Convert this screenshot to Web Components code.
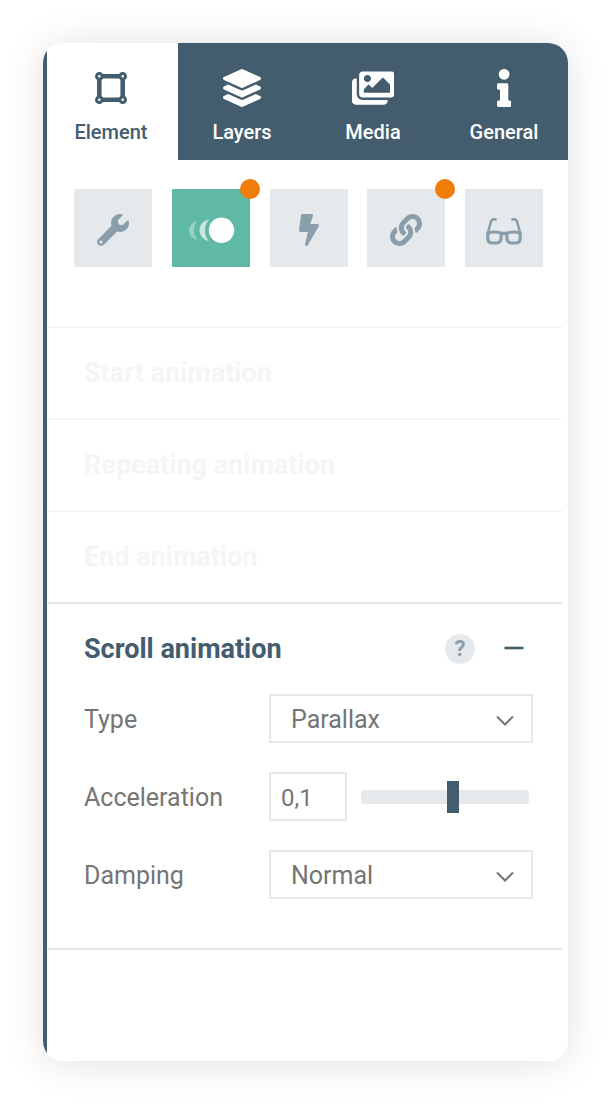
<!DOCTYPE html>
<html lang="en">
<head>
<meta charset="utf-8">
<meta name="viewport" content="width=device-width, initial-scale=1">
<title>Element settings</title>
<style>
    :root {
        --dark: #435d6e;
        --muted: #8a9daa;
        --line: #e4e9ed;
        --tile: #e5e9ec;
        --text: #757575;
        --accent: #5fb9a4;
        --badge: #f07d0a;
    }

    body {
        margin: 0;
        padding: 43px;
        background: #fff;
        font-family: Roboto, "Liberation Sans", sans-serif;
    }
</style>
</head>
<body>
<editor-panel>
    <panel-tab slot="tabs" icon="element" active>Element</panel-tab>
    <panel-tab slot="tabs" icon="layers">Layers</panel-tab>
    <panel-tab slot="tabs" icon="media">Media</panel-tab>
    <panel-tab slot="tabs" icon="info">General</panel-tab>

    <tool-tile slot="tools" icon="wrench" label="Settings"></tool-tile>
    <tool-tile slot="tools" icon="motion" label="Animation" active badge></tool-tile>
    <tool-tile slot="tools" icon="bolt" label="Actions"></tool-tile>
    <tool-tile slot="tools" icon="link" label="Link" badge></tool-tile>
    <tool-tile slot="tools" icon="glasses" label="Visibility"></tool-tile>

    <panel-section heading="Start animation" faded></panel-section>
    <panel-section heading="Repeating animation" faded></panel-section>
    <panel-section heading="End animation" faded></panel-section>
    <panel-section heading="Scroll animation">
        <select-field label="Type" options="Parallax,None"></select-field>
        <slider-field label="Acceleration" min="-1" max="1" step="0.1" value="0.1"></slider-field>
        <select-field label="Damping" options="Normal,Slow,Fast"></select-field>
    </panel-section>
</editor-panel>

<script>
const ICONS = {
    element: {
        box: "0 0 32 32",
        body: `<path fill="none" stroke="currentColor" stroke-width="4.6" d="M4.3 4.3h23.4v23.4h-23.4z"/>
            <g fill="#fff" stroke="currentColor" stroke-width="3">
                <circle cx="4.3" cy="4.3" r="2.8"/><circle cx="27.7" cy="4.3" r="2.8"/>
                <circle cx="4.3" cy="27.7" r="2.8"/><circle cx="27.7" cy="27.7" r="2.8"/>
            </g>`,
    },
    layers: {
        box: "0 0 512 512",
        body: `<path d="M12.41 148.02l232.94 105.67c6.8 3.09 14.49 3.09 21.29 0l232.94-105.67c16.55-7.51 16.55-32.52 0-40.03L266.65 2.31a25.607 25.607 0 0 0-21.29 0L12.41 107.98c-16.55 7.51-16.55 32.53 0 40.04zm487.18 88.28l-58.09-26.33-161.64 73.27c-7.56 3.43-15.59 5.17-23.86 5.17s-16.29-1.74-23.86-5.17L70.51 209.97l-58.1 26.33c-16.55 7.5-16.55 32.5 0 40l232.94 105.59c6.8 3.08 14.49 3.08 21.29 0L499.59 276.3c16.55-7.5 16.55-32.5 0-40zm0 127.8l-57.87-26.23-161.86 73.37c-7.56 3.43-15.59 5.17-23.86 5.17s-16.29-1.74-23.86-5.17L70.29 337.87 12.41 364.1c-16.55 7.5-16.55 32.5 0 40l232.94 105.59c6.8 3.08 14.49 3.08 21.29 0L499.59 404.1c16.55-7.5 16.55-32.5 0-40z"/>`,
    },
    media: {
        box: "0 0 576 512",
        body: `<path d="M480 416v16c0 26.51-21.49 48-48 48H48c-26.51 0-48-21.49-48-48V176c0-26.51 21.49-48 48-48h16v208c0 44.112 35.888 80 80 80h336zm96-80V80c0-26.51-21.49-48-48-48H144c-26.51 0-48 21.49-48 48v256c0 26.51 21.49 48 48 48h384c26.51 0 48-21.49 48-48zM256 128c0 26.51-21.49 48-48 48s-48-21.49-48-48 21.49-48 48-48 48 21.49 48 48zm-96 144l55.515-55.515c4.686-4.686 12.284-4.686 16.971 0L272 256l135.515-135.515c4.686-4.686 12.284-4.686 16.971 0L512 208v112H160v-48z"/>`,
    },
    info: {
        box: "0 0 192 512",
        body: `<path d="M20 424.229h20V279.771H20c-11.046 0-20-8.954-20-20V212c0-11.046 8.954-20 20-20h112c11.046 0 20 8.954 20 20v212.229h20c11.046 0 20 8.954 20 20V492c0 11.046-8.954 20-20 20H20c-11.046 0-20-8.954-20-20v-47.771c0-11.046 8.954-20 20-20zM96 0C56.235 0 24 32.235 24 72s32.235 72 72 72 72-32.235 72-72S135.764 0 96 0z"/>`,
    },
    wrench: {
        box: "0 0 512 512",
        body: `<path d="M507.73 109.1c-2.24-9.03-13.54-12.09-20.12-5.51l-74.36 74.36-67.88-11.31-11.31-67.88 74.36-74.36c6.62-6.62 3.43-17.9-5.66-20.16-47.38-11.74-99.55.91-136.58 37.93-39.64 39.64-50.55 97.1-34.05 147.2L18.74 402.76c-24.99 24.99-24.99 65.51 0 90.5 24.99 24.99 65.51 24.99 90.5 0l213.21-213.21c50.12 16.71 107.47 5.68 147.37-34.22 37.07-37.07 49.7-89.32 37.91-136.73zM64 472c-13.25 0-24-10.75-24-24 0-13.26 10.75-24 24-24s24 10.74 24 24c0 13.25-10.75 24-24 24z"/>`,
    },
    motion: {
        box: "0 0 48 32",
        body: `<circle cx="34.5" cy="16.3" r="12.7"/>
            <path opacity=".65" d="M22 5.4A11 11 0 0 0 22 27.2A16.6 16.6 0 0 1 22 5.4z"/>
            <path opacity=".35" d="M10 7.1A9.3 9.3 0 0 0 10 25.5A15 15 0 0 1 10 7.1z"/>`,
    },
    bolt: {
        box: "0 0 320 512",
        body: `<path d="M296 160H180.6l42.6-129.8C227.2 15 215.7 0 200 0H56C44 0 33.8 8.9 32.2 20.8l-32 240C-1.7 275.2 9.5 288 24 288h118.7L96.6 482.5c-3.6 15.2 8 29.5 23.3 29.5 8.4 0 16.4-4.4 20.8-12l176-304c9.3-15.9-2.2-36-20.7-36z"/>`,
    },
    link: {
        box: "0 0 512 512",
        body: `<path d="M326.612 185.391c59.747 59.809 58.927 155.698.36 214.59-.11.12-.24.25-.36.37l-67.2 67.2c-59.27 59.27-155.699 59.262-214.96 0-59.27-59.26-59.27-155.7 0-214.96l37.106-37.106c9.84-9.84 26.786-3.3 27.294 10.606.648 17.722 3.826 35.527 9.69 52.721 1.986 5.822.567 12.262-3.783 16.612l-13.087 13.087c-28.026 28.026-28.905 73.66-1.155 101.96 28.024 28.579 74.086 28.749 102.325.51l67.2-67.19c28.191-28.191 28.073-73.757 0-101.83-3.701-3.694-7.429-6.564-10.341-8.569a16.037 16.037 0 0 1-6.947-12.606c-.396-10.567 3.348-21.456 11.698-29.806l21.054-21.055c5.521-5.521 14.182-6.199 20.584-1.731a152.482 152.482 0 0 1 20.522 17.197zM467.547 44.449c-59.261-59.262-155.69-59.27-214.96 0l-67.2 67.2c-.12.12-.25.25-.36.37-58.566 58.892-59.387 154.781.36 214.59a152.454 152.454 0 0 0 20.521 17.196c6.402 4.468 15.064 3.789 20.584-1.731l21.054-21.055c8.35-8.35 12.094-19.239 11.698-29.806a16.037 16.037 0 0 0-6.947-12.606c-2.912-2.005-6.64-4.875-10.341-8.569-28.073-28.073-28.191-73.639 0-101.83l67.2-67.19c28.239-28.239 74.3-28.069 102.325.51 27.75 28.3 26.872 73.934-1.155 101.96l-13.087 13.087c-4.35 4.35-5.769 10.79-3.783 16.612 5.864 17.194 9.042 34.999 9.69 52.721.509 13.906 17.454 20.446 27.294 10.606l37.106-37.106c59.271-59.259 59.271-155.699.001-214.959z"/>`,
    },
    glasses: {
        box: "0 0 36 32",
        body: `<g fill="none" stroke="currentColor" stroke-width="3.2" stroke-linecap="round" stroke-linejoin="round">
                <path d="M1.800 19.200Q8.500 16.800 15.400 19.200L15 24.600Q14.500 29 10.300 29H6.700Q1.800 29 1.800 24.500z"/>
                <path d="M34.200 19.200Q27.500 16.800 20.600 19.200L21 24.600Q21.500 29 25.700 29H29.300Q34.200 29 34.200 24.500z"/>
                <path d="M15.400 19.400h5.200"/>
                <path stroke-width="2.600" d="M1.800 19.500L4.800 8Q5.800 4.500 9.600 5.500M34.200 19.500L31.200 8Q30.200 4.500 26.400 5.500"/>
            </g>`,
    },
};

function icon(name) {
    const { box, body } = ICONS[name];
    return `<svg class="${name}" viewBox="${box}" fill="currentColor" aria-hidden="true">${body}</svg>`;
}

class EditorPanel extends HTMLElement {
    constructor() {
        super();
        this.attachShadow({ mode: "open" });
    }

    connectedCallback() {
        this.shadowRoot.innerHTML = `
            <style>
                :host {
                    display: block;
                    box-sizing: border-box;
                    min-height: calc(100vh - 86px);
                    border-radius: 20px;
                    overflow: hidden;
                    background: linear-gradient(to right, var(--dark) 4px, #fff 4px);
                    padding-left: 4px;
                    box-shadow: 0 2px 40px rgb(0 0 0 / 12%);
                }

                nav {
                    display: grid;
                    grid-template-columns: repeat(4, 1fr);
                    margin-right: -3px;
                }

                .tools {
                    display: flex;
                    justify-content: space-between;
                    padding: 29px 25px 59px 27px;
                }

                .sections {
                    margin-right: 6px;
                }
            </style>
            <nav><slot name="tabs"></slot></nav>
            <div class="tools"><slot name="tools"></slot></div>
            <div class="sections"><slot></slot></div>
        `;
    }
}

class PanelTab extends HTMLElement {
    constructor() {
        super();
        this.attachShadow({ mode: "open" });
    }

    connectedCallback() {
        this.shadowRoot.innerHTML = `
            <style>
                :host {
                    display: block;
                    background: var(--dark);
                    color: #fff;
                }

                :host([active]) {
                    background: #fff;
                    color: var(--dark);
                }

                button {
                    display: flex;
                    flex-direction: column;
                    align-items: center;
                    gap: 13px;
                    width: 100%;
                    padding: 26px 3px 16px 0;
                    border: 0;
                    background: none;
                    color: inherit;
                    font: 500 20px/24px Roboto, "Liberation Sans", sans-serif;
                    cursor: pointer;
                }

                svg {
                    display: block;
                    height: 38px;
                }

                svg.element {
                    box-sizing: border-box;
                    padding: 3px 0;
                }
            </style>
            <button type="button">${icon(this.getAttribute("icon"))}<slot></slot></button>
        `;
    }
}

class ToolTile extends HTMLElement {
    constructor() {
        super();
        this.attachShadow({ mode: "open" });
    }

    connectedCallback() {
        this.shadowRoot.innerHTML = `
            <style>
                :host {
                    display: block;
                    position: relative;
                }

                button {
                    display: grid;
                    place-items: center;
                    width: 78px;
                    height: 78px;
                    padding: 3px 0 0;
                    border: 0;
                    background: var(--tile);
                    color: var(--muted);
                    cursor: pointer;
                }

                :host([active]) button {
                    background: var(--accent);
                    color: #fff;
                }

                svg {
                    display: block;
                    height: 32px;
                }

                .badge {
                    position: absolute;
                    top: -10px;
                    right: -10px;
                    width: 20px;
                    height: 20px;
                    border-radius: 50%;
                    background: var(--badge);
                }
            </style>
            <button type="button" aria-label="${this.getAttribute("label")}">${icon(this.getAttribute("icon"))}</button>
            ${this.hasAttribute("badge") ? `<span class="badge"></span>` : ""}
        `;
    }
}

class PanelSection extends HTMLElement {
    constructor() {
        super();
        this.attachShadow({ mode: "open" });
    }

    connectedCallback() {
        const faded = this.hasAttribute("faded");
        this.shadowRoot.innerHTML = `
            <style>
                :host {
                    display: block;
                    border-top: 2px solid var(--line);
                    border-bottom: 2px solid var(--line);
                    padding: 25px 29px 49px 37px;
                    color: var(--dark);
                }

                :host([faded]) {
                    border-top-color: #f3f5f6;
                    border-bottom: 0;
                    padding-bottom: 25px;
                    color: #f3f5f6;
                }

                header {
                    display: flex;
                    align-items: center;
                    height: 40px;
                }

                h2 {
                    flex: 1;
                    margin: 0;
                    font-size: 27px;
                    line-height: 40px;
                    font-weight: 700;
                }

                button {
                    padding: 0;
                    border: 0;
                    cursor: pointer;
                }

                .help {
                    width: 30px;
                    height: 30px;
                    border-radius: 50%;
                    background: var(--tile);
                    color: var(--muted);
                    font: 700 22px/30px Roboto, "Liberation Sans", sans-serif;
                }

                .toggle {
                    width: 20px;
                    height: 30px;
                    margin: 0 9px 0 29px;
                    background: none;
                    color: var(--dark);
                }

                .toggle svg {
                    display: block;
                    width: 20px;
                }

                .fields {
                    display: grid;
                    gap: 29px;
                    margin-top: 25px;
                }
            </style>
            <header>
                <h2>${this.getAttribute("heading")}</h2>
                ${faded ? "" : `
                    <button class="help" type="button" aria-label="Help">?</button>
                    <button class="toggle" type="button" aria-label="Collapse">
                        <svg viewBox="0 0 20 30"><path stroke="currentColor" stroke-width="2.600" d="M0.500 14h19"/></svg>
                    </button>
                `}
            </header>
            ${faded ? "" : `<div class="fields"><slot></slot></div>`}
        `;
    }
}

const FIELD_STYLE = `
    :host {
        display: grid;
        grid-template-columns: 185px 1fr;
        align-items: center;
        color: var(--text);
        font-size: 25px;
        line-height: 30px;
    }

    label {
        padding-top: 2px;
    }

    select, input {
        box-sizing: border-box;
        margin: 0;
        color: inherit;
        font-family: inherit;
    }

    select, input[type="text"] {
        height: 49px;
        border: 2px solid var(--line);
        background: #fff;
    }
`;

class SelectField extends HTMLElement {
    constructor() {
        super();
        this.attachShadow({ mode: "open" });
    }

    connectedCallback() {
        const options = this.getAttribute("options").split(",");
        this.shadowRoot.innerHTML = `
            <style>
                ${FIELD_STYLE}

                .control {
                    display: grid;
                    align-items: center;
                }

                .control > * {
                    grid-area: 1 / 1;
                }

                select {
                    appearance: none;
                    width: 100%;
                    padding: 2px 50px 0 20px;
                    border-radius: 0;
                    font-size: 25px;
                }

                svg {
                    justify-self: end;
                    width: 18px;
                    height: 12px;
                    margin: 4px 19px 0 0;
                    pointer-events: none;
                }
            </style>
            <label for="value">${this.getAttribute("label")}</label>
            <div class="control">
                <select id="value">${options.map((text) => `<option>${text}</option>`).join("")}</select>
                <svg viewBox="0 0 18 12" fill="none" stroke="currentColor" stroke-width="2"><path d="M1 1.500L9 9.500L17 1.500"/></svg>
            </div>
        `;
    }
}

class SliderField extends HTMLElement {
    constructor() {
        super();
        this.attachShadow({ mode: "open" });
        this.handleInput = this.handleInput.bind(this);
    }

    connectedCallback() {
        const attr = (name) => this.getAttribute(name);
        this.shadowRoot.innerHTML = `
            <style>
                ${FIELD_STYLE}

                .control {
                    display: flex;
                    align-items: center;
                    gap: 14px;
                    padding-right: 4px;
                }

                input[type="text"] {
                    width: 78px;
                    padding: 2px 10px 0;
                    border-radius: 2px;
                    font-size: 24px;
                }

                input[type="range"] {
                    appearance: none;
                    flex: 1;
                    min-width: 0;
                    height: 32px;
                    background: none;
                }

                input[type="range"]::-webkit-slider-runnable-track {
                    height: 14px;
                    border-radius: 3px;
                    background: var(--tile);
                }

                input[type="range"]::-webkit-slider-thumb {
                    appearance: none;
                    width: 12px;
                    height: 32px;
                    margin-top: -9px;
                    background: var(--dark);
                }
            </style>
            <label for="value">${attr("label")}</label>
            <div class="control">
                <input id="value" type="text" value="${attr("value").replace(".", ",")}">
                <input type="range" aria-label="${attr("label")}" min="${attr("min")}" max="${attr("max")}" step="${attr("step")}" value="${attr("value")}">
            </div>
        `;
        this.range = this.shadowRoot.querySelector("[type=range]");
        this.range.addEventListener("input", this.handleInput);
    }

    disconnectedCallback() {
        this.range.removeEventListener("input", this.handleInput);
    }

    handleInput() {
        this.shadowRoot.querySelector("#value").value = this.range.value.replace(".", ",");
    }
}

customElements.define("editor-panel", EditorPanel);
customElements.define("panel-tab", PanelTab);
customElements.define("tool-tile", ToolTile);
customElements.define("panel-section", PanelSection);
customElements.define("select-field", SelectField);
customElements.define("slider-field", SliderField);
</script>
</body>
</html>
